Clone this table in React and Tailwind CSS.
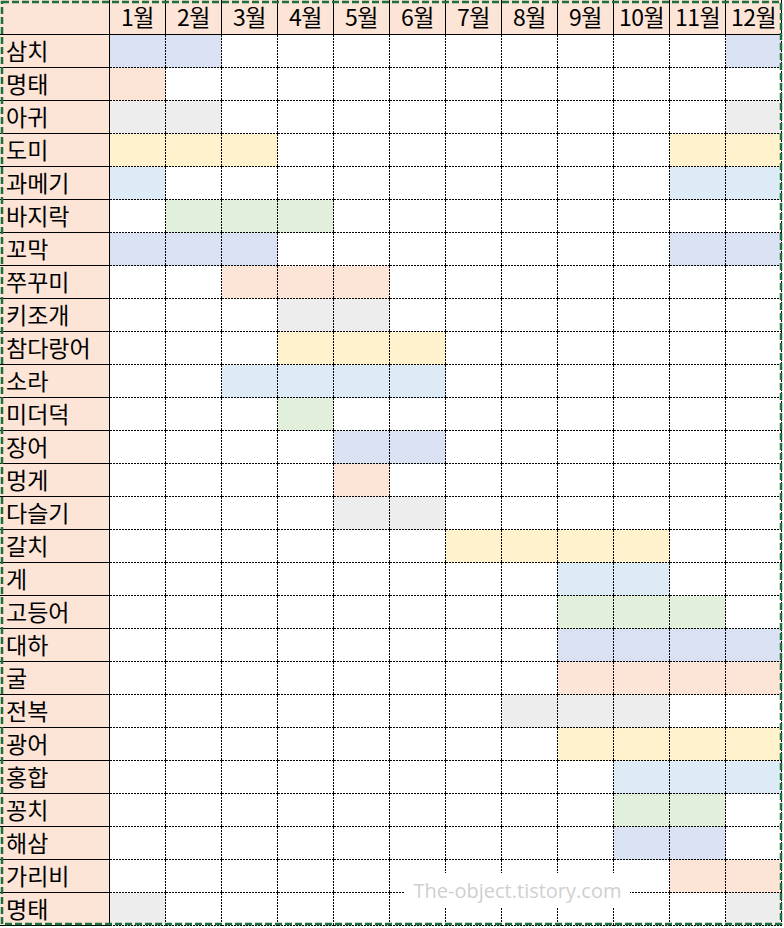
import React from "react";

const C = {
  b: "bg-[#d9e1f2]",
  o: "bg-[#fce4d6]",
  g: "bg-[#ededed]",
  y: "bg-[#fff2cc]",
  l: "bg-[#ddebf7]",
  n: "bg-[#e2efda]",
};

const DOTS =
  "bg-no-repeat [background-image:repeating-linear-gradient(to_right,#000_0px,#000_2px,transparent_2px,transparent_3px),repeating-linear-gradient(to_bottom,#000_0px,#000_2px,transparent_2px,transparent_3px)] [background-size:100%_1px,1px_100%] [background-position:0_100%,100%_0]";

const rows = [
  ["삼치", "b", [1, 2, 12]],
  ["명태", "o", [1]],
  ["아귀", "g", [1, 2, 12]],
  ["도미", "y", [1, 2, 3, 11, 12]],
  ["과메기", "l", [1, 11, 12]],
  ["바지락", "n", [2, 3, 4]],
  ["꼬막", "b", [1, 2, 3, 11, 12]],
  ["쭈꾸미", "o", [3, 4, 5]],
  ["키조개", "g", [4, 5]],
  ["참다랑어", "y", [4, 5, 6]],
  ["소라", "l", [3, 4, 5, 6]],
  ["미더덕", "n", [4]],
  ["장어", "b", [5, 6]],
  ["멍게", "o", [5]],
  ["다슬기", "g", [5, 6]],
  ["갈치", "y", [7, 8, 9, 10]],
  ["게", "l", [9, 10]],
  ["고등어", "n", [9, 10, 11]],
  ["대하", "b", [9, 10, 11, 12]],
  ["굴", "o", [9, 10, 11, 12]],
  ["전복", "g", [8, 9, 10]],
  ["광어", "y", [9, 10, 11, 12]],
  ["홍합", "l", [10, 11, 12]],
  ["꽁치", "n", [10, 11]],
  ["해삼", "b", [10, 11]],
  ["가리비", "o", [11, 12]],
  ["명태", "g", [1, 12]],
];

const months = Array.from({ length: 12 }, (_, i) => i + 1);

export default function App() {
  return (
    <div
      className="relative w-[784px] h-[928px] bg-white overflow-hidden text-black"
      style={{ fontFamily: '"Noto Sans CJK KR", "Noto Sans", sans-serif' }}
    >
      <div className="grid grid-cols-[110px_repeat(12,56px)] grid-rows-[35px_repeat(27,33px)]">
        <div className="bg-[#fce4d6] border-r border-b border-black" />
        {months.map((m) => (
          <div
            key={"h" + m}
            className="bg-[#fce4d6] border-r border-b border-black flex items-center justify-center pb-[2px] text-[23px] leading-none tracking-[-0.5px]"
          >
            {m}월
          </div>
        ))}
        {rows.map(([name, color, ms], ri) => (
          <React.Fragment key={ri}>
            <div className="bg-[#fce4d6] border-r border-b border-black flex items-center pl-[6px] pb-[2px] text-[23px] leading-none">
              {name}
            </div>
            {months.map((m) => (
              <div
                key={m}
                className={DOTS + " " + (ms.includes(m) ? C[color] : "bg-white")}
              />
            ))}
          </React.Fragment>
        ))}
      </div>

      <div
        className="absolute left-[405px] top-[873px] w-[225px] h-[35px] bg-white flex items-center justify-center text-[20px] text-[#d0d0d0] leading-none"
        style={{ fontFamily: '"Open Sans", "Noto Sans", sans-serif' }}
      >
        The-object.tistory.com
      </div>

      <svg
        className="absolute inset-0 pointer-events-none"
        width="784"
        height="928"
      >
        <rect
          x="2"
          y="2"
          width="779"
          height="922"
          fill="none"
          stroke="#1f6f3e"
          strokeWidth="2.5"
          strokeDasharray="7 3"
        />
      </svg>
    </div>
  );
}
